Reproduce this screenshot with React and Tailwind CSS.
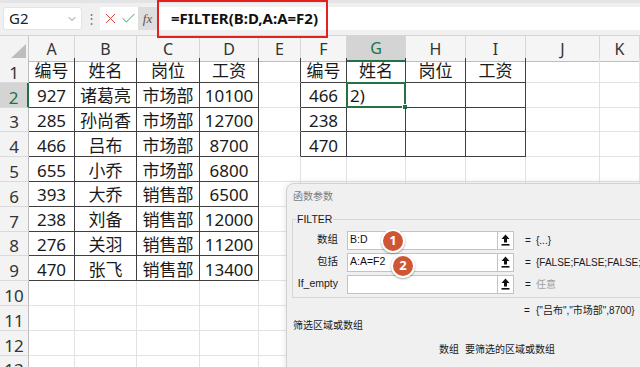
import { X, Check, ChevronDown } from "lucide-react";

const font = { fontFamily: '"Noto Sans", "Noto Sans CJK SC", sans-serif' };
const dlgFont = { fontFamily: '"Liberation Sans", "Noto Sans CJK SC", sans-serif' };

const letters = ["A", "B", "C", "D", "E", "F", "G", "H", "I", "J", "K"];

const left = [
  ["编号", "姓名", "岗位", "工资"],
  ["927", "诸葛亮", "市场部", "10100"],
  ["285", "孙尚香", "市场部", "12700"],
  ["466", "吕布", "市场部", "8700"],
  ["655", "小乔", "市场部", "6800"],
  ["393", "大乔", "销售部", "6500"],
  ["238", "刘备", "销售部", "12000"],
  ["276", "关羽", "销售部", "11200"],
  ["470", "张飞", "销售部", "13400"],
];

const right = [
  ["编号", "姓名", "岗位", "工资"],
  ["466", "", "", ""],
  ["238", "", "", ""],
  ["470", "", "", ""],
];

const gridCols =
  "grid grid-cols-[29px_46px_62px_63px_59px_42px_46px_59px_60px_60px_74px_40px]";

function cellText(r, c) {
  // r starts at 1, c starts at 0 (A)
  if (r <= 9 && c <= 3) return left[r - 1][c];
  if (r <= 4 && c >= 5 && c <= 8) return right[r - 1][c - 5];
  return "";
}

function inTable(r, c) {
  return (r <= 9 && c <= 3) || (r <= 4 && c >= 5 && c <= 8);
}

function Cell({ r, c }) {
  const dark = inTable(r, c);
  const darkRight = dark || (c === 4 && r <= 4);
  const isSel = r === 2 && c === 6;
  return (
    <div
      className={`relative flex items-center border-r border-b ${
        darkRight ? "border-r-[#3f3f3f]" : "border-r-[#e2e2e2]"
      } ${dark ? "border-b-[#3f3f3f]" : "border-b-[#e2e2e2]"} ${
        isSel ? "justify-start pl-[3px]" : "justify-center"
      } pt-[2px] text-[17px] leading-none text-[#1a1a1a] whitespace-nowrap`}
    >
      {isSel ? "2)" : cellText(r, c)}
      {isSel && (
        <div className="absolute -left-[1px] -top-[1px] -right-[1px] -bottom-[1px] border-2 border-[#217346]">
          <div className="absolute -right-[4px] -bottom-[4px] w-[6px] h-[6px] bg-[#217346] border border-white" />
        </div>
      )}
    </div>
  );
}

function UpIcon() {
  return (
    <svg width="9" height="12" viewBox="0 0 9 12">
      <path d="M4.5 0.5 L8.5 5 L6 5 L6 8.5 L3 8.5 L3 5 L0.5 5 Z" fill="#111" />
      <rect x="0.5" y="10" width="8" height="1.6" fill="#111" />
    </svg>
  );
}

function ArgInput({ value }) {
  return (
    <div className="flex h-[19px] w-[167px] items-center border border-[#c3c3c3] bg-white">
      <span className="flex-1 pl-[2px] text-[10.5px] text-[#111]">{value}</span>
      <span className="flex h-full w-[16px] items-center justify-center border-l border-[#c3c3c3]">
        <UpIcon />
      </span>
    </div>
  );
}

function Badge({ n, className }) {
  return (
    <div
      className={`absolute flex h-[24px] w-[24px] items-center justify-center rounded-full border-2 border-white bg-[#cf5634] text-[13px] font-bold text-white shadow-[0_1px_2px_rgba(0,0,0,0.35)] ${className}`}
      style={font}
    >
      {n}
    </div>
  );
}

export default function App() {
  return (
    <div
      className="relative h-[367px] w-[640px] overflow-hidden bg-white"
      style={font}
    >
      {/* formula bar */}
      <div className="flex h-[36px] items-center border-t-[3px] border-[#e4e4e4] border-b border-b-[#d4d4d4] bg-[#f0f0f0] pb-[1px]">
        <div className="ml-[3px] flex h-[23px] w-[79px] items-center justify-between rounded-[3px] border border-[#e3e3e3] bg-white pl-[5px] pr-[3px]">
          <span className="text-[15px] text-[#222]">G2</span>
          <ChevronDown size={12} strokeWidth={1.5} color="#666" />
        </div>
        <div className="flex w-[18px] justify-center text-[13px] leading-none text-[#777]">
          ⋮
        </div>
        <div className="flex h-[23px] w-[38px] items-center justify-around bg-white px-[1px]">
          <X size={17} strokeWidth={1.4} color="#e2433c" />
          <Check size={17} strokeWidth={1.4} color="#3ea35d" />
        </div>
        <div className="flex h-[23px] w-[19px] items-center justify-center bg-[#dedede]">
          <span className="text-[13px] italic text-[#555]" style={{ fontFamily: '"Liberation Serif", serif' }}>
            fx
          </span>
        </div>
        <div className="flex h-[23px] flex-1 items-center bg-white pl-[14px]">
          <span className="text-[15px] font-bold text-[#111]">=FILTER(B:D,A:A=F2)</span>
        </div>
      </div>

      {/* column header */}
      <div className={`${gridCols} h-[22px]`}>
        <div className="flex items-end justify-end border-r border-b border-[#c8c8c8] bg-[#f3f3f3] pb-[2px] pr-[2px]">
          <svg width="16" height="15" viewBox="0 0 16 15">
            <path d="M16 0 L16 15 L0 15 Z" fill="#bdbdbd" />
          </svg>
        </div>
        {letters.map((l) => (
          <div
            key={l}
            className={`flex items-center justify-center border-r border-[#d6d6d6] text-[16px] ${
              l === "G"
                ? "border-b-2 border-b-[#217346] bg-[#d4d4d4] text-[#217346]"
                : "border-b border-b-[#bdbdbd] bg-[#f5f5f5] text-[#333]"
            }`}
          >
            {l}
          </div>
        ))}
      </div>

      {/* rows */}
      {Array.from({ length: 13 }, (_, i) => i + 1).map((r) => (
        <div key={r} className={`${gridCols} h-[24.8px]`}>
          <div
            className={`flex items-end justify-center border-b border-[#dadada] pb-[1px] text-[17px] leading-none ${
              r === 2
                ? "border-r-2 border-r-[#217346] bg-[#d4d4d4] text-[#217346]"
                : "border-r border-r-[#bdbdbd] bg-[#f3f3f3] text-[#333]"
            }`}
          >
            {r}
          </div>
          {letters.map((l, c) => (
            <Cell key={l} r={r} c={c} />
          ))}
        </div>
      ))}

      {/* annotation on the formula */}
      <div className="absolute left-[157px] top-0 h-[38px] w-[171px] border-2 border-[#e3211f]" />

      {/* function arguments dialog */}
      <div
        className="absolute left-[286px] top-[183px] right-[-10px] bottom-[-10px] rounded-tl-[8px] border border-[#d2d2d2] bg-[#f0f0f0] text-[10px] text-[#1a1a1a] shadow-[0_0_6px_rgba(0,0,0,0.12)]"
        style={dlgFont}
      >
        <div className="pl-[6px] pt-[5px] text-[10px] text-[#7d7d7d]">函数参数</div>
        <fieldset className="ml-[5px] mt-[10px] h-[84px] border border-[#d6d6d6] pt-[6px]">
          <legend className="ml-[3px] px-[1px] text-[10.5px] leading-none">FILTER</legend>
          <div className="flex flex-col gap-[3px]">
            {[
              ["数组", "B:D", "{...}", false],
              ["包括", "A:A=F2", "{FALSE;FALSE;FALSE;TRUE;FALSE;FALSE;FALSE;TRUE;FALSE}", false],
              ["If_empty", "", "任意", true],
            ].map(([label, val, res, muted]) => (
              <div key={label} className="flex h-[19px] items-center">
                <span className="w-[46px] pr-[1px] text-right text-[10.5px]">{label}</span>
                <span className="ml-[8px]">
                  <ArgInput value={val} />
                </span>
                <span className="ml-[11px] w-[11px]">=</span>
                <span className={`whitespace-nowrap ${muted ? "text-[#a0a0a0]" : ""}`}>{res}</span>
              </div>
            ))}
          </div>
        </fieldset>
        <div className="mt-[5px] flex h-[14px] items-center pl-[237px] whitespace-nowrap">
          <span className="w-[12px]">=</span>
          <span>{'{"吕布","市场部",8700}'}</span>
        </div>
        <div className="mt-[1px] pl-[6px]">筛选区域或数组</div>
        <div className="mt-[9px] flex gap-[6px] pl-[152px]">
          <span>数组</span>
          <span>要筛选的区域或数组</span>
        </div>
      </div>

      <Badge n="1" className="left-[381px] top-[229px]" />
      <Badge n="2" className="left-[391px] top-[254px]" />
    </div>
  );
}
